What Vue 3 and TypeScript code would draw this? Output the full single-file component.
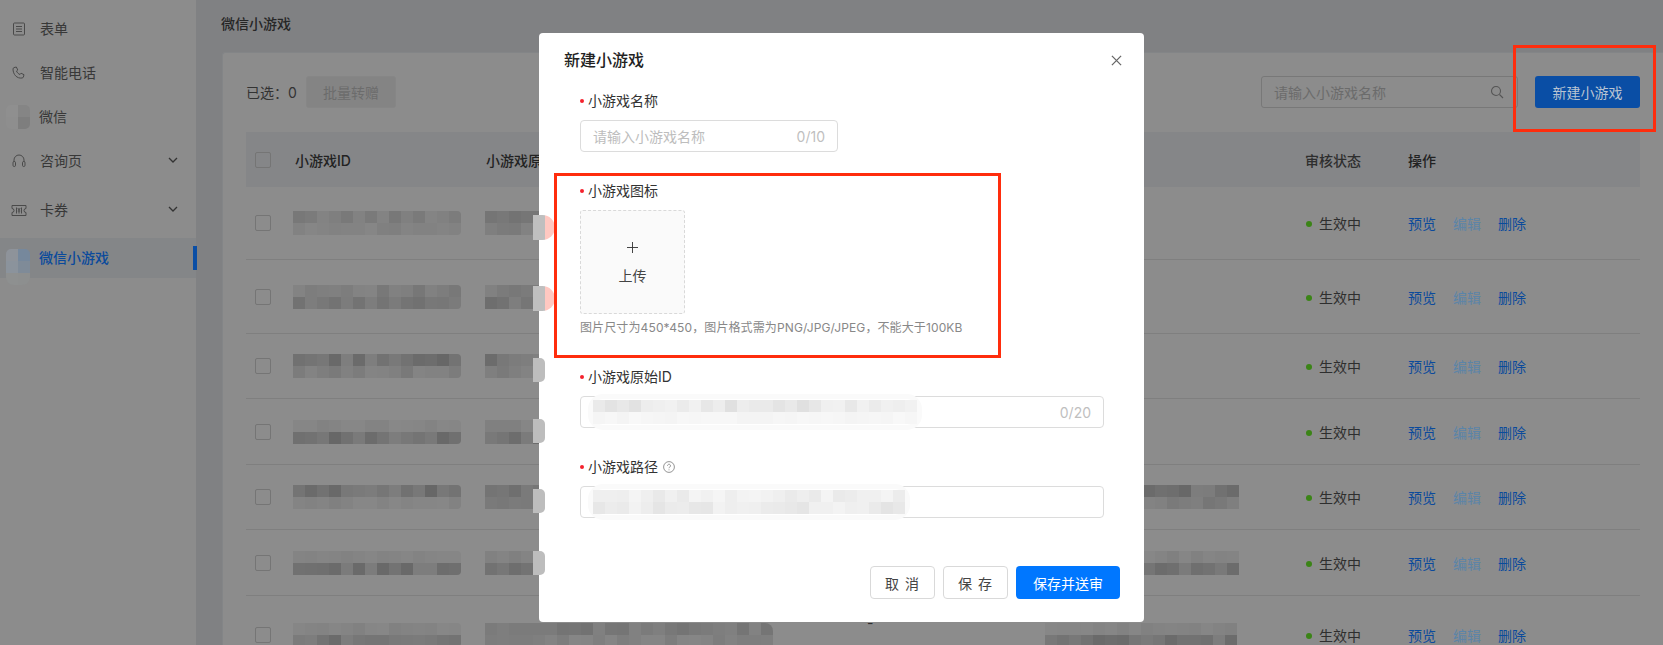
<script setup lang="ts">
type Cell = { key: number; color: string };

function noise(seed: number, i: number): number {
  const v = Math.sin(seed * 12.9898 + i * 78.233) * 43758.5453;
  return v - Math.floor(v);
}

function dimCells(cols: number, rows: number[], seed: number, top = 139, depth = 36): Cell[] {
  const cells: Cell[] = [];
  rows.forEach((strength, r) => {
    for (let c = 0; c < cols; c++) {
      const i = r * cols + c;
      const g = Math.round(top - strength * depth * (0.35 + 0.65 * noise(seed, i)));
      cells.push({ key: i, color: `rgb(${g},${g},${g})` });
    }
  });
  return cells;
}

function lightCells(cols: number, rows: number[], seed: number): Cell[] {
  const cells: Cell[] = [];
  rows.forEach((strength, r) => {
    for (let c = 0; c < cols; c++) {
      const i = r * cols + c;
      const g = Math.round(250 - strength * 26 * (0.3 + 0.7 * noise(seed, i)));
      cells.push({ key: i, color: `rgb(${g},${g},${g})` });
    }
  });
  return cells;
}

const rows = [
  { h: 73, a: [0.55, 0.35], b: [0.7, 0.5], wide: false, c: null as number[] | null },
  { h: 74, a: [0.55, 0.75], b: [0.6, 0.85], wide: false, c: null },
  { h: 65, a: [1, 0.5], b: [0.85, 0.5], wide: false, c: null },
  { h: 66, a: [0.25, 1], b: [0.35, 0.9], wide: false, c: null },
  { h: 65, a: [1, 0.3], b: [1, 0.6], wide: false, c: [1, 0.6] },
  { h: 66, a: [0.25, 1], b: [0.3, 1], wide: false, c: [0.3, 1] },
  { h: 78, a: [0.3, 1], b: [0.7, 0.4], wide: true, c: [0.3, 1] }
].map((r, i) => ({
  ...r,
  key: i,
  idCells: dimCells(14, r.a, i + 1),
  rawCells: dimCells(r.wide ? 24 : 5, r.b, i + 11),
  pathCells: r.c ? dimCells(16, r.c, i + 21) : []
}));

const spots = [
  { key: 1, top: 215, pink: true },
  { key: 2, top: 286, pink: true },
  { key: 3, top: 358, pink: false },
  { key: 4, top: 419, pink: false },
  { key: 5, top: 489, pink: false },
  { key: 6, top: 551, pink: false }
];

const idInput = lightCells(27, [1, 0.25], 5);
const pathInput = lightCells(26, [0.65, 0.85], 9);
const wxCells = [
  { key: 1, color: '#8f8f8f' }, { key: 2, color: '#858585' },
  { key: 3, color: '#8e8e8e' }, { key: 4, color: '#7e7e7e' }
];
const gameCells = [
  { key: 1, color: '#8e939a' }, { key: 2, color: '#76889c' },
  { key: 3, color: '#8b939c' }, { key: 4, color: '#7f8b98' },
  { key: 5, color: '#8e9090' }, { key: 6, color: '#8d8f8f' }
];
</script>

<template>
  <div class="page">
    <aside class="side">
      <div class="nav">
        <svg class="ico" viewBox="0 0 14 14"><rect x="1.5" y="1" width="11" height="12" rx="1" /><path d="M4 4.5h6M4 7h6M4 9.5h6" /></svg>
        <span>表单</span>
      </div>
      <div class="nav">
        <svg class="ico" viewBox="0 0 14 14"><path d="M2 1.6 4.3 1l1.5 3-1.3 1c.7 1.700 1.800 2.800 3.500 3.500l1-1.300 3 1.500-.6 2.300c-.2.600-.7 1-1.400 1C5 12.800 1 8.500 1 3c0-.6.400-1.200 1-1.400Z" /></svg>
        <span>智能电话</span>
      </div>
      <div class="nav">
        <div class="thumb">
          <i v-for="c in wxCells" :key="c.key" :style="{ background: c.color }"></i>
        </div>
        <span>微信</span>
      </div>
      <div class="nav">
        <svg class="ico" viewBox="0 0 14 14"><path d="M2 8V6a5 5 0 0 1 10 0v2" /><rect x="1" y="7.500" width="2.500" height="5" rx="1.200" /><rect x="10.500" y="7.500" width="2.500" height="5" rx="1.200" /></svg>
        <span>咨询页</span>
        <svg class="chev" viewBox="0 0 10 6"><path d="M1 1l4 4 4-4" /></svg>
      </div>
      <div class="nav nav-gap">
        <svg class="ico wide" viewBox="0 0 16 13"><path d="M1 1.500h14v3a2 2 0 0 0 0 4v3H1v-3a2 2 0 0 0 0-4Z" /><path d="M5.500 3.500v6M10.500 3.500v6M6.800 4 8 6l1.200-2M8 6v3.500M6.800 7h2.400" /></svg>
        <span>卡券</span>
        <svg class="chev" viewBox="0 0 10 6"><path d="M1 1l4 4 4-4" /></svg>
      </div>
      <div class="nav active">
        <div class="thumb tall">
          <i v-for="c in gameCells" :key="c.key" :style="{ background: c.color }"></i>
        </div>
        <span>微信小游戏</span>
        <b class="bar"></b>
      </div>
    </aside>

    <main class="main">
      <h1 class="crumb">微信小游戏</h1>
      <section class="card">
        <div class="tools">
          <span class="sel">已选：0</span>
          <button class="batch">批量转赠</button>
          <div class="grow"></div>
          <div class="search">
            <span>请输入小游戏名称</span>
            <svg viewBox="0 0 14 14"><circle cx="6" cy="6" r="4.500" /><path d="m9.500 9.500 3.500 3.500" /></svg>
          </div>
          <button class="create">新建小游戏</button>
        </div>

        <div class="thead tr">
          <div class="c-check"><i class="box"></i></div>
          <div class="c-id">小游戏ID</div>
          <div class="c-raw">小游戏原始ID</div>
          <div class="c-path"></div>
          <div class="c-state">审核状态</div>
          <div class="c-op">操作</div>
        </div>
        <div v-for="r in rows" :key="r.key" class="tr row" :style="{ height: r.h + 'px' }">
          <div class="c-check"><i class="box"></i></div>
          <div class="c-id">
            <div class="mos m14"><i v-for="c in r.idCells" :key="c.key" :style="{ background: c.color }"></i></div>
          </div>
          <div class="c-raw">
            <div class="mos" :class="r.wide ? 'm24' : 'm5'"><i v-for="c in r.rawCells" :key="c.key" :style="{ background: c.color }"></i></div>
          </div>
          <div class="c-path">
            <template v-if="r.wide"><span class="dash">-</span></template>
            <div v-if="r.pathCells.length" class="mos m16 shift" :class="{ near: r.wide }"><i v-for="c in r.pathCells" :key="c.key" :style="{ background: c.color }"></i></div>
          </div>
          <div class="c-state"><i class="dot"></i>生效中</div>
          <div class="c-op">
            <a>预览</a><a class="off">编辑</a><a>删除</a>
          </div>
        </div>
      </section>
    </main>

    <div class="modal">
      <header class="m-head">
        <h2>新建小游戏</h2>
        <svg viewBox="0 0 12 12"><path d="m1 1 10 10M11 1 1 11" /></svg>
      </header>
      <div class="form">
        <label class="lab">小游戏名称</label>
        <div class="inp short"><span class="ph">请输入小游戏名称</span><span class="count">0/10</span></div>

        <label class="lab next">小游戏图标</label>
        <div class="upload">
          <svg viewBox="0 0 12 12"><path d="M6 0v12M0 6h12" /></svg>
          <span>上传</span>
        </div>
        <p class="hint">图片尺寸为450*450，图片格式需为PNG/JPG/JPEG，不能大于100KB</p>

        <label class="lab after-hint">小游戏原始ID</label>
        <div class="inp">
          <div class="mos light m27"><i v-for="c in idInput" :key="c.key" :style="{ background: c.color }"></i></div>
          <span class="count">0/20</span>
        </div>

        <label class="lab next">小游戏路径
          <svg class="help" viewBox="0 0 12 12"><circle cx="6" cy="6" r="5.400" /><path d="M4.500 4.700a1.500 1.500 0 1 1 2.300 1.300c-.5.300-.8.600-.8 1.200" /><path d="M6 8.400v.9" /></svg>
        </label>
        <div class="inp">
          <div class="mos light m26"><i v-for="c in pathInput" :key="c.key" :style="{ background: c.color }"></i></div>
        </div>
      </div>
      <footer class="m-foot">
        <button class="ghost">取 消</button>
        <button class="ghost">保 存</button>
        <button class="submit">保存并送审</button>
      </footer>
    </div>

    <div
      v-for="s in spots"
      :key="s.key"
      class="spot"
      :class="{ pink: s.pink }"
      :style="{ top: s.top + 'px' }"
    ></div>
    <div class="mark mark-form"></div>
    <div class="mark mark-btn"></div>
  </div>
</template>

<style>
html, body { margin: 0; padding: 0; background: #8c8c8c; }
</style>

<style scoped>
.page {
  position: relative;
  display: flex;
  width: 1663px;
  height: 645px;
  overflow: hidden;
  background: #8c8c8c;
  font-family: Inter, "Noto Sans CJK SC", sans-serif;
  font-size: 14px;
  color: #2e2e2e;
}
i { display: block; font-style: normal; }
button { font-family: inherit; padding: 0; cursor: pointer; }

.side {
  flex: none;
  width: 196px;
  padding-top: 7px;
  box-sizing: border-box;
  background: #8c8c8c;
  color: #383838;
}
.nav {
  position: relative;
  display: flex;
  align-items: center;
  height: 44px;
  padding-left: 12px;
}
.nav > span { margin-left: 14px; line-height: 20px; }
.nav-gap { margin-top: 5px; }
.ico {
  flex: none;
  width: 14px;
  height: 14px;
  fill: none;
  stroke: #4a4a4a;
  stroke-width: 1;
}
.ico.wide { width: 16px; height: 13px; margin-left: -1px; margin-right: -1px; }
.chev {
  position: absolute;
  left: 168px;
  top: 18px;
  width: 10px;
  height: 6px;
  fill: none;
  stroke: #333;
  stroke-width: 1.300;
}
.thumb {
  display: grid;
  grid-template-columns: 12px 12px;
  grid-auto-rows: 12px;
  flex: none;
  width: 24px;
  height: 24px;
  margin: 0 -5px 0 -6px;
  overflow: hidden;
  border-radius: 5px;
}
.thumb.tall { height: 36px; margin-top: 18px; border-radius: 5px 5px 8px 8px; }
.active {
  height: 40px;
  margin-top: 6px;
  background: #848688;
  color: #0a4a9c;
  font-weight: 500;
}
.bar {
  position: absolute;
  left: 193px;
  top: 8px;
  width: 4px;
  height: 24px;
  background: #0a4ea5;
}

.main {
  flex: 1;
  min-width: 0;
  padding-left: 26px;
  background: #808183;
}
.crumb {
  margin: 0;
  height: 52px;
  margin-left: -1px;
  font-size: 14px;
  font-weight: 500;
  line-height: 48px;
  color: #262626;
}
.card {
  height: 593px;
  padding: 24px 23px 0 23px;
  box-sizing: border-box;
  border-top: 1px solid #838587;
  border-left: 1px solid #838587;
  border-top-left-radius: 3px;
  background: #8c8c8c;
  overflow: hidden;
}
.tools {
  display: flex;
  align-items: center;
  height: 32px;
  margin-top: -1px;
  margin-bottom: 24px;
}
.sel { color: #333; width: 60px; }
.batch {
  width: 90px;
  height: 32px;
  border: 1px solid #868686;
  border-radius: 3px;
  background: #848484;
  color: #6c6c6c;
  font-size: 14px;
}
.grow { flex: 1; }
.search {
  display: flex;
  align-items: center;
  justify-content: space-between;
  width: 257px;
  height: 32px;
  padding: 0 13px 0 12px;
  box-sizing: border-box;
  border: 1px solid #787878;
  border-radius: 3px;
  color: #6b6b6b;
}
.search svg {
  width: 14px;
  height: 14px;
  fill: none;
  stroke: #555;
  stroke-width: 1.100;
}
.create {
  width: 105px;
  height: 32px;
  margin-left: 17px;
  border: 0;
  border-radius: 3px;
  background: #0a4ea5;
  color: #b9c4d2;
  font-size: 14px;
}

.tr {
  display: grid;
  grid-template-columns: 47px 192px 382px 438px 103px 1fr;
  align-items: center;
}
.thead {
  height: 55px;
  background: #858688;
  color: #222;
  font-weight: 500;
}
.thead .c-id { padding-left: 2px; }
.thead .c-raw { padding-left: 1px; }
.row { border-bottom: 1px solid #7f7f7f; box-sizing: border-box; }
.box {
  width: 14px;
  height: 14px;
  margin-left: 9px;
  border: 1px solid #757575;
  border-radius: 2px;
}
.mos { display: grid; grid-auto-rows: 12px; }
.m5 { grid-template-columns: repeat(5, 12px); width: 60px; }
.m14 { grid-template-columns: repeat(14, 12px); width: 168px; border-radius: 0 4px 4px 0; overflow: hidden; }
.m24 { grid-template-columns: repeat(24, 12px); width: 288px; border-radius: 0 8px 0 0; overflow: hidden; }
.m16 { grid-template-columns: repeat(16, 12px); width: 192px; }
.m26 { grid-template-columns: repeat(26, 12px); width: 312px; }
.m27 { grid-template-columns: repeat(27, 12px); width: 324px; }
.c-path { position: relative; display: flex; align-items: center; }
.shift { margin-left: 180px; }
.near { margin-left: 178px; }
.dash { position: absolute; left: 0; top: -10px; line-height: 20px; }
.dot {
  display: inline-block;
  width: 6px;
  height: 6px;
  margin-right: 7px;
  margin-left: 1px;
  vertical-align: 2px;
  border-radius: 50%;
  background: #3b8416;
}
.c-state { white-space: nowrap; color: #2e2e2e; }
.c-op { display: flex; gap: 17px; }
.c-op a { color: #0b4a9c; }
.c-op a.off { color: #5b84a8; }
.thead .c-op { display: block; }

.modal {
  position: absolute;
  left: 539px;
  top: 33px;
  width: 605px;
  height: 589px;
  display: flex;
  flex-direction: column;
  box-sizing: border-box;
  background: #fff;
  border-radius: 4px;
  color: #333;
}
.m-head {
  display: flex;
  align-items: center;
  justify-content: space-between;
  height: 22px;
  padding: 16px 22px 0 25px;
}
.m-head h2 { margin: 0; font-size: 16px; font-weight: 500; line-height: 22px; color: #222; }
.m-head svg { width: 11px; height: 11px; fill: none; stroke: #666; stroke-width: 1.400; }
.form {
  display: flex;
  flex-direction: column;
  align-items: flex-start;
  padding: 19px 40px 0 41px;
}
.lab {
  position: relative;
  display: flex;
  align-items: center;
  height: 22px;
  padding-left: 8px;
  line-height: 22px;
  color: #333;
}
.lab::before {
  content: "";
  position: absolute;
  left: 0;
  top: 9px;
  width: 4px;
  height: 4px;
  border-radius: 50%;
  background: #f5222d;
}
.lab.next { margin-top: 28px; }
.lab.after-hint { margin-top: 30px; }
.help {
  width: 12px;
  height: 12px;
  margin-left: 5px;
  fill: none;
  stroke: #888;
  stroke-width: .9;
}
.inp {
  display: flex;
  align-items: center;
  justify-content: space-between;
  width: 524px;
  height: 32px;
  margin-top: 8px;
  padding: 0 12px;
  box-sizing: border-box;
  border: 1px solid #dcdcdc;
  border-radius: 4px;
}
.inp.short { width: 258px; }
.ph { color: #bdbdbd; }
.count { color: #bfbfbf; }
.light {
  padding: 1px 0;
  border-radius: 10px;
  box-shadow: 0 0 0 5px #fafafa;
}
.upload {
  display: flex;
  flex-direction: column;
  align-items: center;
  width: 105px;
  height: 104px;
  margin-top: 8px;
  padding-top: 31px;
  box-sizing: border-box;
  border: 1px dashed #d9d9d9;
  border-radius: 3px;
  background: #fafafa;
  color: #444;
}
.upload svg { width: 11px; height: 11px; fill: none; stroke: #333; stroke-width: 1; }
.upload span { margin-top: 13px; line-height: 20px; }
.hint {
  margin: 6px 0 0;
  font-size: 12px;
  line-height: 16px;
  letter-spacing: .12px;
  color: #888;
  white-space: nowrap;
}
.m-foot {
  display: flex;
  justify-content: flex-end;
  gap: 8px;
  margin-top: 48px;
  padding-right: 24px;
}
.ghost {
  width: 65px;
  height: 33px;
  border: 1px solid #d9d9d9;
  border-radius: 4px;
  background: #fff;
  color: #444;
  font-size: 14px;
  letter-spacing: 1px;
}
.submit {
  width: 104px;
  height: 33px;
  border: 0;
  border-radius: 4px;
  background: #0077ff;
  color: #fff;
  font-size: 14px;
}

.spot {
  position: absolute;
  left: 533px;
  width: 12px;
  height: 24px;
  background: #bdbdbd;
  border-radius: 0 5px 5px 0;
}
.spot.pink {
  width: 22px;
  height: 25px;
  background: linear-gradient(90deg, #bfbfbf 12px, #ffc8c1 12px);
  border-radius: 0 13px 13px 0;
}
.mark {
  position: absolute;
  box-sizing: border-box;
  border: 3px solid #ff2d0d;
  pointer-events: none;
}
.mark-form { left: 554px; top: 173px; width: 447px; height: 185px; }
.mark-btn { left: 1513px; top: 45px; width: 143px; height: 87px; }
</style>
